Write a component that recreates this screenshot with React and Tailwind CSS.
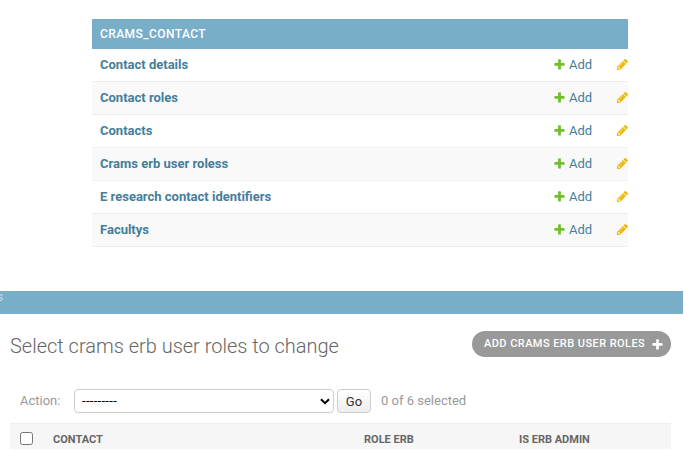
const models = [
  'Contact details',
  'Contact roles',
  'Contacts',
  'Crams erb user roless',
  'E research contact identifiers',
  'Facultys',
];

function PlusIcon({ className }) {
  return (
    <svg viewBox="0 0 1792 1792" fill="currentColor" className={className}>
      <path d="M1600 796v192q0 40-28 68t-68 28h-416v416q0 40-28 68t-68 28h-192q-40 0-68-28t-28-68v-416h-416q-40 0-68-28t-28-68v-192q0-40 28-68t68-28h416v-416q0-40 28-68t68-28h192q40 0 68 28t28 68v416h416q40 0 68 28t28 68z" />
    </svg>
  );
}

function PencilIcon({ className }) {
  return (
    <svg viewBox="0 0 1792 1792" fill="currentColor" className={className}>
      <path d="M491 1536l91-91-235-235-91 91v107h128v128h107zm523-928q0-22-22-22-10 0-17 7l-542 542q-7 7-7 17 0 22 22 22 10 0 17-7l542-542q7-7 7-17zm-54-192l416 416-832 832h-416v-416zm683 96q0 53-37 90l-166 166-416-416 166-165q36-38 90-38 53 0 91 38l235 234q37 39 37 91z" />
    </svg>
  );
}

function AppModule() {
  return (
    <section className="mt-[19px] ml-[92px] w-[536px] overflow-hidden">
      <h2 className="flex h-[30px] items-center bg-[#79aec8] px-2 text-[12px] font-medium tracking-[0.42px] text-white">
        CRAMS_CONTACT
      </h2>
      {models.map((name) => (
        <div
          key={name}
          className="flex h-[33px] items-center border-b border-[#eeeeee] bg-white pl-2 text-[13px] leading-4 text-[#447e9b] even:bg-white odd:bg-[#f9f9f9]"
        >
          <a className="flex-1 font-bold">{name}</a>
          <a className="flex w-[63px] items-center gap-[3px]">
            <PlusIcon className="mb-px size-[13px] shrink-0 text-[#70bf2b]" />
            Add
          </a>
          <PencilIcon className="-mr-px mb-px size-[13px] shrink-0 text-[#efb80b]" />
        </div>
      ))}
    </section>
  );
}

function ChangeList() {
  return (
    <main className="pr-[13px] pl-[10px]">
      <div className="flex h-[75px] items-start justify-between pt-[17px]">
        <h1 className="mt-[3px] text-[20px] leading-6 font-light tracking-[-0.01px] text-[#666666]">
          Select crams erb user roles to change
        </h1>
        <a className="flex h-[26px] w-[199px] items-center justify-between rounded-full bg-[#999999] pr-[7px] pl-3 text-[11px] font-medium tracking-[0.44px] whitespace-nowrap text-white">
          ADD CRAMS ERB USER ROLES
          <PlusIcon className="size-[13px] shrink-0" />
        </a>
      </div>
      <div className="flex h-[34px] items-start pl-[10px] text-[13px] leading-6 text-[#999999]">
        <span className="w-[54px]">Action:</span>
        <div className="flex h-6 w-[260px] items-center justify-between rounded-[4px] border border-[#cccccc] bg-white pr-[3px] pl-[7px] text-black">
          <span className="tracking-[0.3px]">---------</span>
          <svg viewBox="0 0 10 7" className="h-[7px] w-[10px]" fill="none" stroke="currentColor" strokeWidth="2">
            <path d="M1 1.2L5 5.2L9 1.2" />
          </svg>
        </div>
        <button className="ml-[3px] h-6 w-[34px] rounded-[4px] border border-[#cccccc] bg-linear-to-b from-white to-[#eeeeee] text-[13px] leading-6 text-[#333333]">
          Go
        </button>
        <span className="ml-[10px]">0 of 6 selected</span>
      </div>
      <div className="flex h-[26px] items-start border-t border-[#eeeeee] bg-[#f6f6f6] pt-2 pl-[10px] text-[11px] leading-4 font-bold text-[#666666]">
        <span className="mr-5 size-[13px] rounded-[2.5px] border border-[#767676] bg-white" />
        <span className="w-[311px]">CONTACT</span>
        <span className="w-[155px]">ROLE ERB</span>
        <span>IS ERB ADMIN</span>
      </div>
    </main>
  );
}

export default function App() {
  return (
    <div className="h-[450px] w-[684px] overflow-hidden bg-white font-[Roboto,sans-serif]">
      <AppModule />
      <div className="mt-[44px] flex h-[23px] w-[683px] justify-start overflow-hidden bg-[#79aec8] text-[13px] leading-3 text-[#c4dce8]">
        <span className="-ml-[3.5px]">s</span>
      </div>
      <ChangeList />
    </div>
  );
}
